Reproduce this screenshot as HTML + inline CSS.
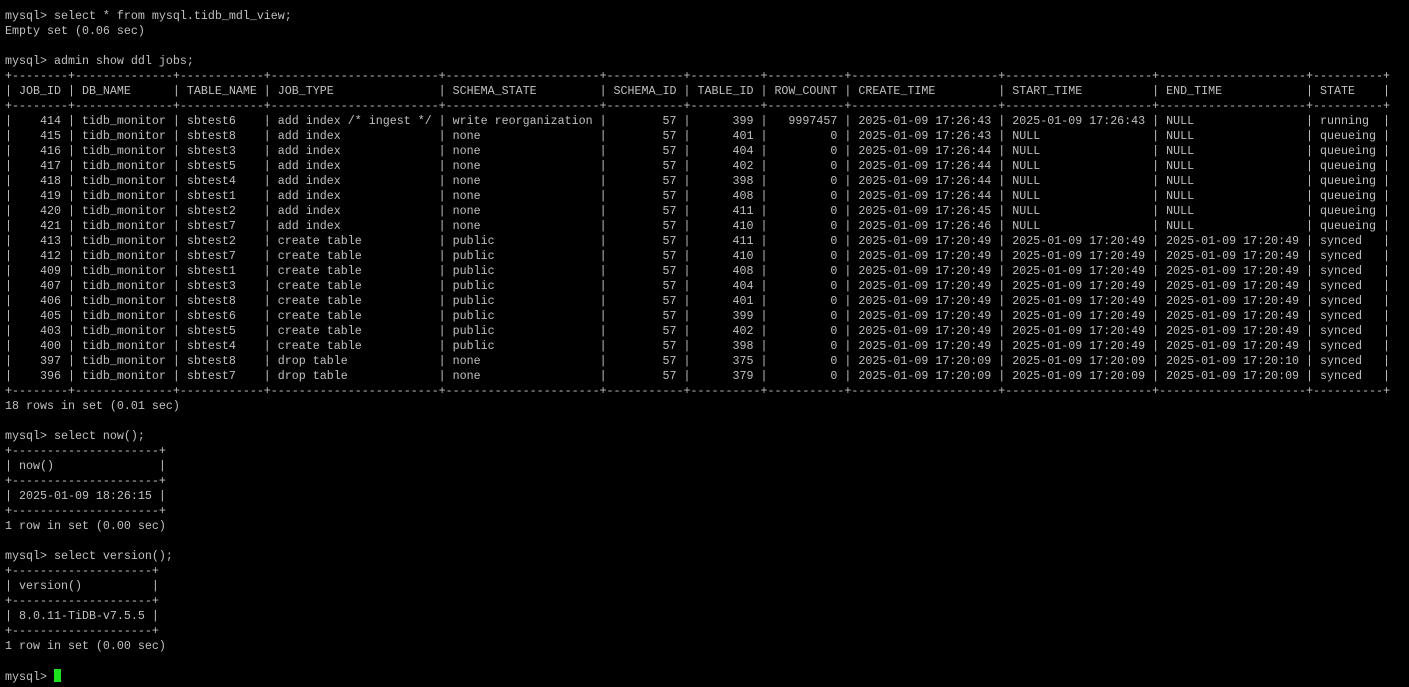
<!DOCTYPE html>
<html><head><style>
html,body{margin:0;padding:0;background:#000;width:1409px;height:687px;overflow:hidden}
pre{margin:0;position:absolute;left:5px;top:9px;font-family:"Liberation Mono",monospace;font-size:11.67px;line-height:15px;color:#c0c0c0;white-space:pre}
.cur{display:inline-block;width:7px;height:13px;background:#1ee11e;vertical-align:-2px}
</style></head><body><pre>mysql&gt; select * from mysql.tidb_mdl_view;
Empty set (0.06 sec)

mysql&gt; admin show ddl jobs;
+--------+--------------+------------+------------------------+----------------------+-----------+----------+-----------+---------------------+---------------------+---------------------+----------+
| JOB_ID | DB_NAME      | TABLE_NAME | JOB_TYPE               | SCHEMA_STATE         | SCHEMA_ID | TABLE_ID | ROW_COUNT | CREATE_TIME         | START_TIME          | END_TIME            | STATE    |
+--------+--------------+------------+------------------------+----------------------+-----------+----------+-----------+---------------------+---------------------+---------------------+----------+
|    414 | tidb_monitor | sbtest6    | add index /* ingest */ | write reorganization |        57 |      399 |   9997457 | 2025-01-09 17:26:43 | 2025-01-09 17:26:43 | NULL                | running  |
|    415 | tidb_monitor | sbtest8    | add index              | none                 |        57 |      401 |         0 | 2025-01-09 17:26:43 | NULL                | NULL                | queueing |
|    416 | tidb_monitor | sbtest3    | add index              | none                 |        57 |      404 |         0 | 2025-01-09 17:26:44 | NULL                | NULL                | queueing |
|    417 | tidb_monitor | sbtest5    | add index              | none                 |        57 |      402 |         0 | 2025-01-09 17:26:44 | NULL                | NULL                | queueing |
|    418 | tidb_monitor | sbtest4    | add index              | none                 |        57 |      398 |         0 | 2025-01-09 17:26:44 | NULL                | NULL                | queueing |
|    419 | tidb_monitor | sbtest1    | add index              | none                 |        57 |      408 |         0 | 2025-01-09 17:26:44 | NULL                | NULL                | queueing |
|    420 | tidb_monitor | sbtest2    | add index              | none                 |        57 |      411 |         0 | 2025-01-09 17:26:45 | NULL                | NULL                | queueing |
|    421 | tidb_monitor | sbtest7    | add index              | none                 |        57 |      410 |         0 | 2025-01-09 17:26:46 | NULL                | NULL                | queueing |
|    413 | tidb_monitor | sbtest2    | create table           | public               |        57 |      411 |         0 | 2025-01-09 17:20:49 | 2025-01-09 17:20:49 | 2025-01-09 17:20:49 | synced   |
|    412 | tidb_monitor | sbtest7    | create table           | public               |        57 |      410 |         0 | 2025-01-09 17:20:49 | 2025-01-09 17:20:49 | 2025-01-09 17:20:49 | synced   |
|    409 | tidb_monitor | sbtest1    | create table           | public               |        57 |      408 |         0 | 2025-01-09 17:20:49 | 2025-01-09 17:20:49 | 2025-01-09 17:20:49 | synced   |
|    407 | tidb_monitor | sbtest3    | create table           | public               |        57 |      404 |         0 | 2025-01-09 17:20:49 | 2025-01-09 17:20:49 | 2025-01-09 17:20:49 | synced   |
|    406 | tidb_monitor | sbtest8    | create table           | public               |        57 |      401 |         0 | 2025-01-09 17:20:49 | 2025-01-09 17:20:49 | 2025-01-09 17:20:49 | synced   |
|    405 | tidb_monitor | sbtest6    | create table           | public               |        57 |      399 |         0 | 2025-01-09 17:20:49 | 2025-01-09 17:20:49 | 2025-01-09 17:20:49 | synced   |
|    403 | tidb_monitor | sbtest5    | create table           | public               |        57 |      402 |         0 | 2025-01-09 17:20:49 | 2025-01-09 17:20:49 | 2025-01-09 17:20:49 | synced   |
|    400 | tidb_monitor | sbtest4    | create table           | public               |        57 |      398 |         0 | 2025-01-09 17:20:49 | 2025-01-09 17:20:49 | 2025-01-09 17:20:49 | synced   |
|    397 | tidb_monitor | sbtest8    | drop table             | none                 |        57 |      375 |         0 | 2025-01-09 17:20:09 | 2025-01-09 17:20:09 | 2025-01-09 17:20:10 | synced   |
|    396 | tidb_monitor | sbtest7    | drop table             | none                 |        57 |      379 |         0 | 2025-01-09 17:20:09 | 2025-01-09 17:20:09 | 2025-01-09 17:20:09 | synced   |
+--------+--------------+------------+------------------------+----------------------+-----------+----------+-----------+---------------------+---------------------+---------------------+----------+
18 rows in set (0.01 sec)

mysql&gt; select now();
+---------------------+
| now()               |
+---------------------+
| 2025-01-09 18:26:15 |
+---------------------+
1 row in set (0.00 sec)

mysql&gt; select version();
+--------------------+
| version()          |
+--------------------+
| 8.0.11-TiDB-v7.5.5 |
+--------------------+
1 row in set (0.00 sec)

mysql&gt; <span class="cur"></span></pre></body></html>
